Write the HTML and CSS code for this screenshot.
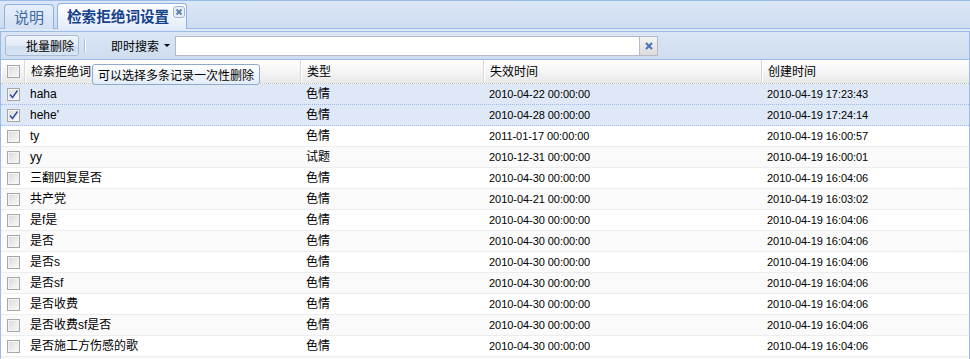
FILE: index.html
```html
<!DOCTYPE html>
<html lang="zh-CN">
<head>
  <meta charset="UTF-8" />
  <title>检索拒绝词设置</title>
  <link rel="stylesheet" href="styles.css">
</head>
<body>
  <!-- Tab strip -->
  <div class="tab-strip">
    <div class="tab">说明</div>
    <div class="tab active">检索拒绝词设置
      <span class="tab-close">
        <svg width="10" height="10" viewBox="0 0 10 10"><path d="M2.5 2.5 L7.5 7.5 M7.5 2.5 L2.5 7.5" stroke="#5f7ea8" stroke-width="1.8"/></svg>
      </span>
    </div>
  </div>
  <div class="strip-spacer"></div>

  <div class="panel">
    <!-- Toolbar -->
    <div class="toolbar">
      <button class="tb-btn">批量删除</button>
      <span class="tb-sep"></span>
      <span class="tb-menu">即时搜索 <span class="caret"></span></span>
      <div class="search">
        <input type="text" class="search-input">
        <span class="search-clear">
          <svg width="10" height="10" viewBox="0 0 10 10"><path d="M2 2 L8 8 M8 2 L2 8" stroke="#4a72b8" stroke-width="2"/></svg>
        </span>
      </div>
    </div>

    <!-- Grid -->
    <div class="grid">
      <div class="grid-head">
        <div class="cell chk"><span class="cb"></span></div>
        <div class="cell">检索拒绝词</div>
        <div class="cell">类型</div>
        <div class="cell">失效时间</div>
        <div class="cell">创建时间</div>
      </div>
      <div class="grid-body" id="gridBody"></div>
      <div class="tip">可以选择多条记录一次性删除</div>
    </div>
  </div>

  <script>
    var rows = [
      ['haha', '色情', '2010-04-22 00:00:00', '2010-04-19 17:23:43', true],
      ["hehe'", '色情', '2010-04-28 00:00:00', '2010-04-19 17:24:14', true],
      ['ty', '色情', '2011-01-17 00:00:00', '2010-04-19 16:00:57'],
      ['yy', '试题', '2010-12-31 00:00:00', '2010-04-19 16:00:01'],
      ['三翻四复是否', '色情', '2010-04-30 00:00:00', '2010-04-19 16:04:06'],
      ['共产党', '色情', '2010-04-21 00:00:00', '2010-04-19 16:03:02'],
      ['是f是', '色情', '2010-04-30 00:00:00', '2010-04-19 16:04:06'],
      ['是否', '色情', '2010-04-30 00:00:00', '2010-04-19 16:04:06'],
      ['是否s', '色情', '2010-04-30 00:00:00', '2010-04-19 16:04:06'],
      ['是否sf', '色情', '2010-04-30 00:00:00', '2010-04-19 16:04:06'],
      ['是否收费', '色情', '2010-04-30 00:00:00', '2010-04-19 16:04:06'],
      ['是否收费sf是否', '色情', '2010-04-30 00:00:00', '2010-04-19 16:04:06'],
      ['是否施工方伤感的歌', '色情', '2010-04-30 00:00:00', '2010-04-19 16:04:06'],
      ['', '', '', '']
    ];
    var body = document.getElementById('gridBody');
    rows.forEach(function(r, i) {
      var row = document.createElement('div');
      row.className = 'row' + (r[4] ? ' selected' : '') + (i % 2 === 1 ? ' alt' : '');
      row.innerHTML =
        '<div class="cell chk"><span class="cb' + (r[4] ? ' checked' : '') + '">' +
        (r[4] ? '<svg width="11" height="11" viewBox="0 0 11 11"><path d="M2 5.5 L4.5 8.5 L9.5 1.5" fill="none" stroke="#3552a8" stroke-width="1.6"/></svg>' : '') +
        '</span></div>' +
        '<div class="cell">' + r[0] + '</div>' +
        '<div class="cell">' + r[1] + '</div>' +
        '<div class="cell num">' + r[2] + '</div>' +
        '<div class="cell num">' + r[3] + '</div>';
      body.appendChild(row);
    });
  </script>
</body>
</html>
```

FILE: styles.css
```css
* {
  margin: 0;
  padding: 0;
  box-sizing: border-box;
}
body {
  font-family: "Liberation Sans", "Noto Sans CJK SC", sans-serif;
  font-size: 12px;
  color: #000;
  background: #fff;
  width: 970px;
  height: 359px;
  overflow: hidden;
}

/* Tab strip */
.tab-strip {
  height: 29px;
  border-top: 1px solid #99bbe8;
  border-bottom: 1px solid #99bbe8;
  background: linear-gradient(#dbe7f7, #cddcf0);
  display: flex;
  align-items: flex-end;
  gap: 3px;
  padding-left: 4px;
}
.tab {
  height: 25px;
  margin-bottom: -1px;
  padding: 0 9px;
  border: 1px solid #8db2e3;
  border-bottom: none;
  border-radius: 4px 4px 0 0;
  background: linear-gradient(#e6eefa, #d4e1f3);
  color: #416aa3;
  font-size: 15px;
  line-height: 24px;
  font-family: "Noto Sans CJK SC", sans-serif;
}
.tab.active {
  background: linear-gradient(#ffffff, #e3ecf9);
  color: #15428b;
  font-weight: bold;
  font-size: 14.6px;
  padding-right: 1px;
  display: flex;
  align-items: flex-start;
  gap: 4px;
  height: 26px;
  white-space: nowrap;
}
.tab-close {
  margin-top: 2px;
  width: 12px;
  height: 12px;
  border: 1px solid #9fb5d2;
  border-radius: 3px;
  background: #e8eef7;
  display: flex;
  align-items: center;
  justify-content: center;
}
.strip-spacer {
  height: 2px;
  background: #dfe8f6;
}

/* Panel */
.panel {
  border-left: 1px solid #99bbe8;
  border-right: 1px solid #99bbe8;
}

/* Toolbar */
.toolbar {
  height: 29px;
  border-top: 1px solid #99bbe8;
  border-bottom: 1px solid #99bbe8;
  background: linear-gradient(#dae6f5, #cfddef);
  display: flex;
  align-items: center;
  padding-left: 4px;
}
.tb-btn {
  width: 74px;
  height: 21px;
  padding: 0 4px 0 0;
  border: 1px solid #a6bcd8;
  border-radius: 3px;
  background: linear-gradient(#f2f6fc 0%, #e0e9f5 50%, #cfdcee 51%, #dbe6f4 100%);
  font-family: "Noto Sans CJK SC", sans-serif;
  font-size: 12px;
  line-height: 19px;
  text-align: right;
  color: #000;
  white-space: nowrap;
}
.tb-sep {
  width: 2px;
  height: 14px;
  margin: 0 25px 0 5px;
  border-left: 1px solid #98c0f4;
  border-right: 1px solid #fff;
}
.tb-menu {
  font-family: "Noto Sans CJK SC", sans-serif;
  display: flex;
  align-items: center;
  gap: 4px;
  margin-right: 5px;
  white-space: nowrap;
}
.caret {
  width: 0;
  height: 0;
  border-left: 3px solid transparent;
  border-right: 3px solid transparent;
  border-top: 3px solid #000;
  margin-left: 1px;
}
.search {
  display: flex;
  height: 20px;
}
.search-input {
  width: 465px;
  height: 20px;
  border: 1px solid #b5b8c8;
  background: #fff;
  outline: none;
}
.search-clear {
  width: 18px;
  height: 20px;
  border: 1px solid #b5b8c8;
  border-left: none;
  background: linear-gradient(#f4f4f4, #dcdcdc);
  display: flex;
  align-items: center;
  justify-content: center;
}

/* Grid */
.grid {
  position: relative;
}
.grid-head, .row {
  display: grid;
  grid-template-columns: 23px 276px 183px 278px 1fr;
}
.grid-head {
  height: 24px;
  background: linear-gradient(#ffffff, #f5f5f5 50%, #e8e8e8);
  border-bottom: 1px dotted #c0c0c0;
  font-family: "Noto Sans CJK SC", sans-serif;
}
.grid-head .cell {
  line-height: 23px;
  padding-top: 1px;
  border-left: 1px solid #d8d8d8;
  box-shadow: inset 1px 0 0 #fff;
}
.grid-head .cell:first-child {
  border-left: none;
  padding-top: 0;
}
.cell {
  padding-left: 6px;
  white-space: nowrap;
  overflow: hidden;
  font-family: "Liberation Sans", "Noto Sans CJK SC", sans-serif;
}
.cell.chk {
  padding-left: 6px;
  display: flex;
  align-items: center;
}
.row {
  height: 21px;
  line-height: 20px;
  border-bottom: 1px solid #ededed;
  background: #fff;
}
.row .cell {
  font-size: 12px;
}
.row .cell.num {
  font-size: 11px;
  letter-spacing: -0.05px;
}
.row.alt {
  background: #fafafa;
}
.row.selected {
  background: #dfe8f6;
  border-bottom: 1px dotted #a3bae9;
}
.cb {
  width: 13px;
  height: 13px;
  border: 1px solid #a7a7a7;
  background: linear-gradient(135deg, #d9d9d9, #fbfbfb);
  box-shadow: inset 0 0 0 1px #f4f4f4;
  display: flex;
  align-items: center;
  justify-content: center;
}
.cb.checked {
  background: linear-gradient(135deg, #dcdcdc, #fafafa);
}

/* Tooltip */
.tip {
  position: absolute;
  left: 91px;
  top: 4px;
  height: 21px;
  padding: 0 5px;
  border: 1px solid #8eaace;
  border-radius: 3px;
  background: linear-gradient(#ffffff, #e4ecf7);
  font-family: "Noto Sans CJK SC", sans-serif;
  line-height: 19px;
  white-space: nowrap;
}
```
